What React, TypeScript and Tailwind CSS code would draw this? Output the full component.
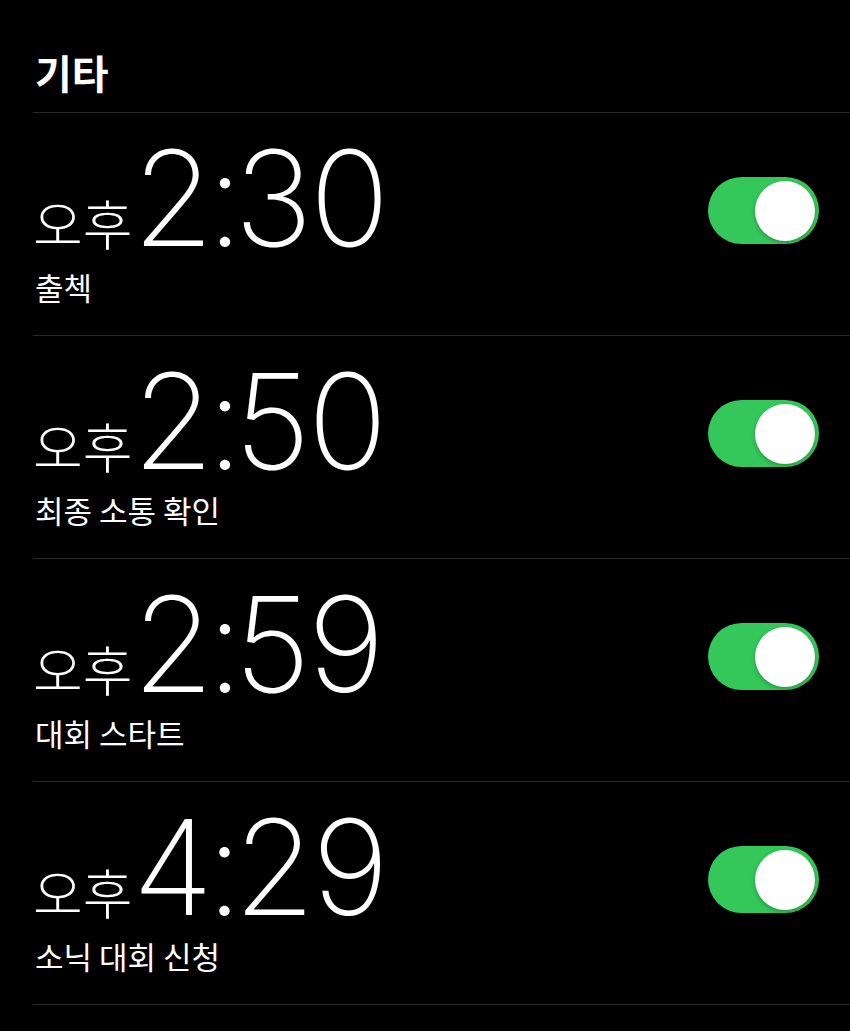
import React from "react";

const alarms = [
  { time: "2:30", label: "출첵" },
  { time: "2:50", label: "최종 소통 확인" },
  { time: "2:59", label: "대회 스타트" },
  { time: "4:29", label: "소닉 대회 신청" },
];

const Toggle = () => (
  <div className="w-[111px] h-[67px] rounded-full bg-[#34c759] flex items-center justify-end pr-[4px] shrink-0 mt-[64px]">
    <div className="w-[60px] h-[60px] rounded-full bg-white shadow-[0_2px_4px_rgba(0,0,0,0.25)]" />
  </div>
);

export default function App() {
  return (
    <div className="w-[850px] h-[1031px] bg-black text-white overflow-hidden font-['Inter','Noto_Sans_CJK_KR',sans-serif]">
      <div className="pl-[33px]">
        <h2 className="pt-[48px] pb-[16px] pl-[2px] text-[40px] leading-[48px] font-bold font-['Noto_Sans_CJK_KR',sans-serif]">
          기타
        </h2>
        {alarms.map((a, i) => {
          const [h, m] = a.time.split(":");
          return (
            <div key={i} className="border-t border-[#2a2a2a] h-[223px] flex items-start pr-[31px]">
              <div className="flex-1 pt-[19px]">
                <div className="flex items-baseline h-[133px]">
                  <span className="text-[54px] leading-none font-light font-['Noto_Sans_CJK_KR',sans-serif]">오후</span>
                  <span className="text-[132px] leading-[132px] font-extralight tracking-[-3px]">
                    <span className="tracking-[-7px]">{h}</span>
                    <span className="tracking-[-9px]">:</span>
                    {m}
                  </span>
                </div>
                <div className="text-[31px] leading-[36px] pl-[2px] mt-[4px] font-['Noto_Sans_CJK_KR',sans-serif]">
                  {a.label}
                </div>
              </div>
              <Toggle />
            </div>
          );
        })}
        <div className="border-t border-[#2a2a2a]" />
      </div>
    </div>
  );
}
